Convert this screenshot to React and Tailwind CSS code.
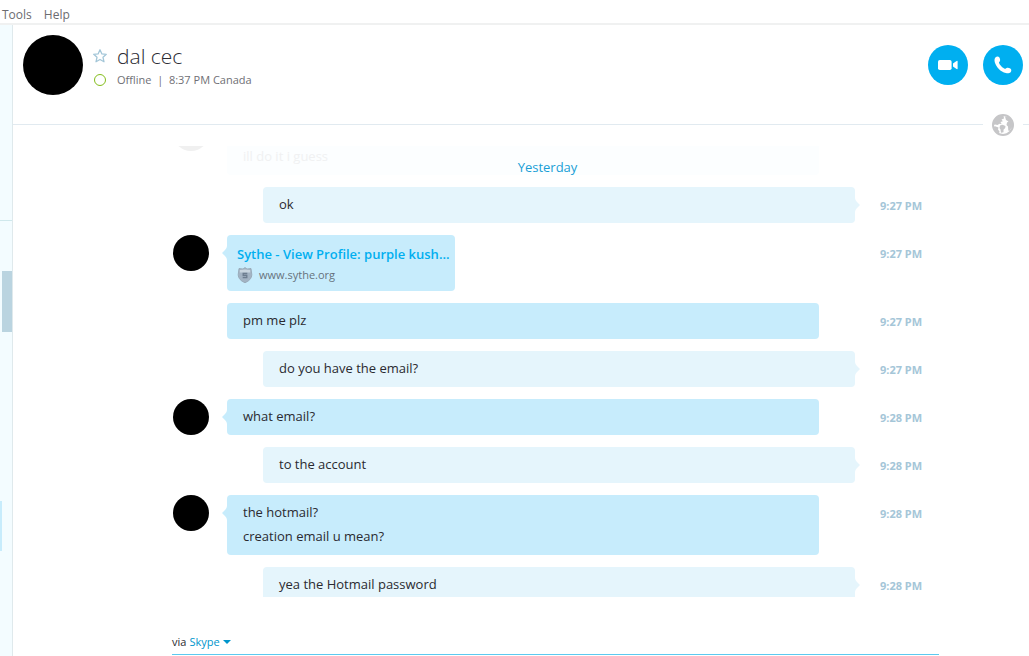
import { useState } from 'react';

const messages = [
  { id: 1, from: 'them', faded: true, avatar: true, lines: ['ill do it i guess'] },
  { id: 2, from: 'me', tail: true, lines: ['ok'], time: '9:27 PM' },
  {
    id: 3, from: 'them', avatar: true, tail: true, time: '9:27 PM',
    link: { title: 'Sythe - View Profile: purple kush...', host: 'www.sythe.org' },
  },
  { id: 4, from: 'them', lines: ['pm me plz'], time: '9:27 PM' },
  { id: 5, from: 'me', tail: true, lines: ['do you have the email?'], time: '9:27 PM' },
  { id: 6, from: 'them', avatar: true, tail: true, lines: ['what email?'], time: '9:28 PM' },
  { id: 7, from: 'me', tail: true, lines: ['to the account'], time: '9:28 PM' },
  { id: 8, from: 'them', avatar: true, tail: true, lines: ['the hotmail?', 'creation email u mean?'], time: '9:28 PM' },
  { id: 9, from: 'me', tail: true, lines: ['yea the Hotmail password'], time: '9:28 PM' },
];

function StarIcon() {
  return (
    <svg viewBox="0 0 14 14" className="w-3.5 h-3.5" fill="none" stroke="#a3c6d8" strokeWidth="1.3" strokeLinejoin="round">
      <path d="M7 .8 8.9 4.9 13.3 5.3 10 8.3 11 12.8 7 10.5 3 12.8 4 8.3 .7 5.3 5.1 4.9z" />
    </svg>
  );
}

function VideoIcon() {
  return (
    <svg viewBox="0 0 20 10" className="w-5 h-2.5" fill="#fff">
      <rect x="0" y="0" width="13.6" height="10" rx="1.8" />
      <path d="M15 3.4 18.6 1q1-.5 1 .5v7q0 1-1 .5L15 6.6z" />
    </svg>
  );
}

function PhoneIcon() {
  return (
    <svg viewBox="0 0 18 18" className="w-[18px] h-[18px]" fill="#fff">
      <path d="M1.6 1.2C2.8.2 4.6.3 5.4 1.5c.7 1.2 1 2.8.4 3.8-.3.6-.9.9-.8 1.5.4 1.9 3.8 5.5 6 6 .7.1 1-.6 1.6-.9 1-.5 2.5-.2 3.7.6 1.3.8 1.3 2.6.3 3.7-1.1 1.2-3 1.3-4.7.9C6.600 15.700 2.200 11.200.8 6.200.3 4.400.4 2.200 1.600 1.200z" />
    </svg>
  );
}

function GlobeIcon() {
  return (
    <svg viewBox="0 0 22 22" className="w-[22px] h-[22px]">
      <circle cx="11" cy="11" r="10" fill="#fff" stroke="#c6c6c8" strokeWidth="2" />
      <path fill="#c6c6c8" d="M11.5 1C5 1 1 5 1 11.5L3 10.5l2.500.5 2-1.200 2.200.5L8.500 8l2.300-.8L9.500 5.500l2.500-1z" />
      <path fill="#c6c6c8" d="M3 12.300l3.500 1.200-.5 2 1.500 2-.5 2L3.500 17 1.500 13z" />
      <path fill="#c6c6c8" d="M8 11.500l2.500-.8 3 1.300-.3 2-1.700 1.700v2.500l-2.500.5-.5-3.200L7.500 14z" />
      <path fill="#c6c6c8" d="M13 2.500l5 1L21 9.500l-.5 3.500-1.500 1.500-1.500 2.500-1.200-.5-.3-4-1.500-1.500.5-2.500 1.500-1-2.500-1.500z" />
    </svg>
  );
}

function ShieldIcon() {
  return (
    <svg viewBox="0 0 16 16" className="w-4 h-4">
      <path d="M8 .5 10 2l4-.5.8 6c0 4-3 6.800-6.800 8.200C4.200 14.300 1.200 11.500 1.200 7.500l.8-6L6 2z" fill="#a3b3c3" stroke="#93a3b1" strokeWidth=".8" />
      <path d="M2.800 3 8 2.400 13.200 3v2.500H2.800z" fill="#c9d5df" />
      <path d="M10.300 6.500H6.200v2h3.600v2.200H5.700" fill="none" stroke="#6d7d8f" strokeWidth="1.300" />
    </svg>
  );
}

function Tail({ side }) {
  return side === 'me' ? (
    <svg viewBox="0 0 5 14" className="absolute left-full top-[11px] w-[5px] h-3.5" fill="#e5f5fc">
      <path d="M0 0Q0 2 2 4L5 7 2 10Q0 12 0 14z" />
    </svg>
  ) : (
    <svg viewBox="0 0 5 14" className="absolute right-full top-[11px] w-[5px] h-3.5" fill="#c7ecfc">
      <path d="M5 0Q5 2 3 4L0 7l3 3Q5 12 5 14z" />
    </svg>
  );
}

function LinkCard({ link }) {
  return (
    <a href="#profile" className="block pl-2.5 pr-[5px] pt-2 pb-1.5">
      <span className="block leading-[22px] font-semibold text-[#00aff0] whitespace-nowrap">{link.title}</span>
      <span className="flex items-center gap-1.5 leading-5 text-[11px] text-[#66727c]">
        <ShieldIcon />
        {link.host}
      </span>
    </a>
  );
}

function bubbleColor(from, faded) {
  if (faded) return 'bg-[#fcfeff] text-[#f0f1f2]';
  return from === 'me' ? 'bg-[#e5f5fc]' : 'bg-[#c7ecfc]';
}

function Message({ message }) {
  const { from, avatar, tail, lines, link, time, faded } = message;
  const mine = from === 'me';
  return (
    <li className="flex items-start">
      <div className="w-9 shrink-0 mr-[18px]">
        {avatar && <div className={`size-9 rounded-full ${faded ? 'bg-[#f0f0f0]' : 'bg-black'}`} />}
      </div>
      <div className={`flex-1 min-w-0 ${mine ? 'pl-9' : 'pr-9'}`}>
        <div className={`relative rounded ${bubbleColor(from, faded)} ${link ? 'w-fit' : ''}`}>
          {tail && <Tail side={from} />}
          {link ? (
            <LinkCard link={link} />
          ) : (
            <div className={`px-4 pt-[5px] pb-[7px] leading-6 ${faded ? 'min-h-15 flex items-end' : ''}`}>
              {lines.map(line => <p key={line}>{line}</p>)}
            </div>
          )}
        </div>
      </div>
      <time className="w-[42px] shrink-0 ml-[25px] pt-[9px] leading-5 text-[11px] font-bold text-[#a5c6d8] whitespace-nowrap font-['Noto_Sans',sans-serif]">{time}</time>
    </li>
  );
}

function Sidebar() {
  return (
    <aside className="w-[13px] shrink-0 bg-[#f3fcff] border-r border-[#dfe9ec]">
      <div className="h-[196px] border-b border-[#cfe8ec]" />
      <div className="mt-[50px] ml-0.5 h-[61px] bg-[#bad4e0]" />
      <div className="mt-[169px] w-0.5 h-[50px] bg-[#c7ecfc]" />
    </aside>
  );
}

function ContactHeader() {
  const [favorite, setFavorite] = useState(false);
  return (
    <header className="flex items-start justify-between pt-2.5 pl-2.5 pr-1.5 pb-[19px]">
      <div className="flex">
        <div className="size-15 rounded-full bg-black" />
        <div className="ml-2.5 pt-1.5">
          <div className="flex items-center gap-2.5">
            <button aria-label="Favorite" aria-pressed={favorite} onClick={() => setFavorite(!favorite)}>
              <StarIcon />
            </button>
            <h1 className="text-[21px] leading-[30px] font-light text-[#2b2b33]">dal cec</h1>
          </div>
          <div className="flex items-center gap-2.5 text-[11px] leading-[17px] text-[#6f6f75]">
            <span className="w-3.5 flex justify-center">
              <span className="size-3 rounded-full border border-[#84bd1c]" />
            </span>
            <p>Offline&nbsp; |&nbsp; 8:37 PM Canada</p>
          </div>
        </div>
      </div>
      <div className="flex gap-[15px] pt-2.5">
        <button aria-label="Video call" className="size-10 rounded-full bg-[#00aff0] flex items-center justify-center">
          <VideoIcon />
        </button>
        <button aria-label="Call" className="size-10 rounded-full bg-[#00aff0] flex items-center justify-center">
          <PhoneIcon />
        </button>
      </div>
    </header>
  );
}

export default function App() {
  return (
    <div className="h-screen flex flex-col overflow-hidden bg-white text-[13px] text-[#2a2a30] font-['Open_Sans','Noto_Sans',sans-serif]">
      <nav className="flex gap-3 px-0.5 pt-1.5 border-b-2 border-[#f0f1f1] text-xs leading-[17px] text-[#6c6c70]">
        <button>Tools</button>
        <button>Help</button>
      </nav>

      <div className="flex-1 min-h-0 flex">
        <Sidebar />
        <main className="flex-1 min-w-0 flex flex-col">
          <ContactHeader />
          <div className="flex items-center">
            <div className="flex-1 h-0.5 border-t border-[#e1eaf0]" />
            <div className="mx-[9px]"><GlobeIcon /></div>
            <div className="w-1.5 h-0.5 border-t border-[#e1eaf0]" />
          </div>

          <section className="relative flex-1 min-h-0 mt-2.5 ml-40 mr-[90px] pr-[17px]">
            <h2 className="absolute inset-x-0 top-[11px] z-10 pr-[17px] text-center leading-5 text-[#1a9fd6]">Yesterday</h2>
            <div className="h-full overflow-hidden">
              <ul className="-mt-[31px] flex flex-col gap-3">
                {messages.map(message => <Message key={message.id} message={message} />)}
              </ul>
            </div>
          </section>

          <footer className="ml-[159px] mr-[90px] pt-9 pb-px">
            <div className="flex items-center gap-[3px] pb-[3px] border-b border-[#5cc9f0] text-[11px] leading-[18px]">
              <span>via</span>
              <button className="flex items-center gap-[3px] text-[#0095cc]">
                Skype
                <svg viewBox="0 0 8 4" className="w-2 h-1" fill="currentColor"><path d="M0 0h8L4 4z" /></svg>
              </button>
            </div>
          </footer>
        </main>
      </div>
    </div>
  );
}
